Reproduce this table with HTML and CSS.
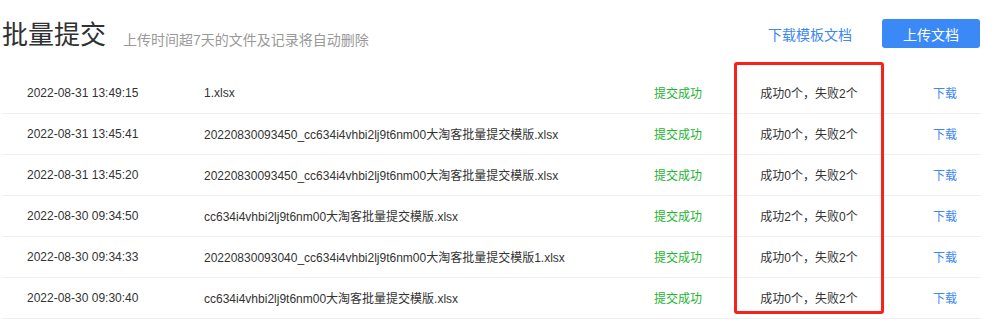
FILE: index.html
```html
<!DOCTYPE html>
<html lang="zh-CN">
<head>
<meta charset="utf-8">
<title>批量提交</title>
<link rel="stylesheet" href="styles.css">
</head>
<body>
<div class="page">
  <div class="header">
    <div class="heading">
      <h1 class="title">批量提交</h1>
      <span class="subtitle">上传时间超7天的文件及记录将自动删除</span>
    </div>
    <div class="actions">
      <a class="template-link">下载模板文档</a>
      <button class="upload-btn">上传文档</button>
    </div>
  </div>
  <div class="table">
    <div class="row">
      <div class="cell c-date">2022-08-31 13:49:15</div>
      <div class="cell c-name">1.xlsx</div>
      <div class="cell c-status">提交成功</div>
      <div class="cell c-result">成功0个，失败2个</div>
      <div class="cell c-dl">下载</div>
    </div>
    <div class="row">
      <div class="cell c-date">2022-08-31 13:45:41</div>
      <div class="cell c-name">20220830093450_cc634i4vhbi2lj9t6nm00大淘客批量提交模版.xlsx</div>
      <div class="cell c-status">提交成功</div>
      <div class="cell c-result">成功0个，失败2个</div>
      <div class="cell c-dl">下载</div>
    </div>
    <div class="row">
      <div class="cell c-date">2022-08-31 13:45:20</div>
      <div class="cell c-name">20220830093450_cc634i4vhbi2lj9t6nm00大淘客批量提交模版.xlsx</div>
      <div class="cell c-status">提交成功</div>
      <div class="cell c-result">成功0个，失败2个</div>
      <div class="cell c-dl">下载</div>
    </div>
    <div class="row">
      <div class="cell c-date">2022-08-30 09:34:50</div>
      <div class="cell c-name">cc634i4vhbi2lj9t6nm00大淘客批量提交模版.xlsx</div>
      <div class="cell c-status">提交成功</div>
      <div class="cell c-result">成功2个，失败0个</div>
      <div class="cell c-dl">下载</div>
    </div>
    <div class="row">
      <div class="cell c-date">2022-08-30 09:34:33</div>
      <div class="cell c-name">20220830093040_cc634i4vhbi2lj9t6nm00大淘客批量提交模版1.xlsx</div>
      <div class="cell c-status">提交成功</div>
      <div class="cell c-result">成功0个，失败2个</div>
      <div class="cell c-dl">下载</div>
    </div>
    <div class="row">
      <div class="cell c-date">2022-08-30 09:30:40</div>
      <div class="cell c-name">cc634i4vhbi2lj9t6nm00大淘客批量提交模版.xlsx</div>
      <div class="cell c-status">提交成功</div>
      <div class="cell c-result">成功0个，失败2个</div>
      <div class="cell c-dl">下载</div>
    </div>
  </div>
  <div class="highlight"></div>
</div>
</body>
</html>
```

FILE: styles.css
```css
html, body {
  margin: 0;
  padding: 0;
  background: #ffffff;
}
body {
  font-family: "Liberation Sans", "Noto Sans CJK SC", sans-serif;
  color: #333333;
}
.page {
  position: relative;
  width: 995px;
  height: 322px;
  overflow: hidden;
}
.header {
  display: flex;
  align-items: center;
  justify-content: space-between;
  height: 29px;
  margin-top: 19px;
  padding-left: 2px;
  padding-right: 15px;
}
.heading {
  display: flex;
  align-items: baseline;
  gap: 17px;
  padding-top: 3px;
}
.title {
  margin: 0;
  font-size: 26px;
  font-weight: normal;
  color: #303133;
  line-height: 30px;
}
.subtitle {
  font-size: 14px;
  color: #999999;
  position: relative;
  top: 1px;
}
.actions {
  display: flex;
  align-items: center;
  gap: 30px;
}
.template-link {
  font-size: 14px;
  color: #3d87f5;
  cursor: pointer;
}
.upload-btn {
  width: 98px;
  height: 29px;
  border: none;
  border-radius: 3px;
  background: #3a89f7;
  color: #ffffff;
  font-family: "Liberation Sans", "Noto Sans CJK SC", sans-serif;
  font-size: 14px;
  padding: 0;
}
.table {
  margin-top: 25px;
  margin-left: 2px;
  width: 979px;
}
.row {
  display: flex;
  align-items: center;
  height: 41px;
  box-sizing: border-box;
  border-bottom: 1px solid #eef0f5;
  font-size: 12px;
  padding-bottom: 1px;
}
.cell {
  white-space: nowrap;
}
.c-date {
  width: 177px;
  padding-left: 25px;
}
.c-name {
  width: 450px;
}
.c-status {
  width: 80px;
  color: #1cb52f;
}
.c-result {
  width: 150px;
  text-align: center;
}
.c-dl {
  padding-left: 49px;
  color: #3d87f5;
}
.highlight {
  position: absolute;
  left: 734px;
  top: 62px;
  width: 150px;
  height: 252px;
  box-sizing: border-box;
  border: 3px solid #f7221a;
  border-radius: 3px;
}
```
